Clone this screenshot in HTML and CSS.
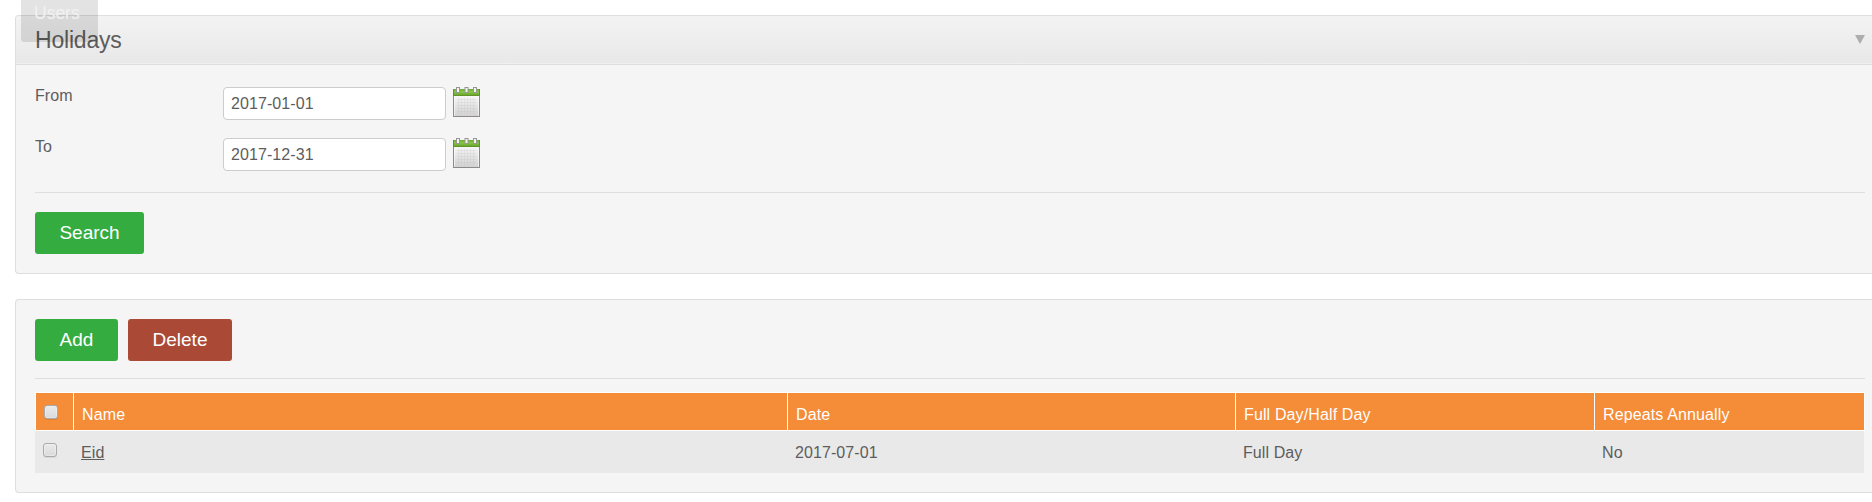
FILE: index.html
```html
<!DOCTYPE html>
<html lang="en">
<head>
<meta charset="utf-8">
<title>Holidays</title>
<link rel="stylesheet" href="styles.css">
</head>
<body>
<svg class="defs" width="0" height="0">
  <defs>
    <linearGradient id="paper" x1="0" y1="0" x2="0" y2="1"><stop offset="0" stop-color="#f8f8f8"/><stop offset="1" stop-color="#d2d0d1"/></linearGradient>
    <linearGradient id="band" x1="0" y1="0" x2="0" y2="1"><stop offset="0" stop-color="#6fa735"/><stop offset=".4" stop-color="#86c844"/><stop offset="1" stop-color="#649a2b"/></linearGradient>
    <symbol id="calendar" viewBox="0 0 27 30">
      <rect x=".5" y="8.5" width="26" height="21" fill="url(#paper)" stroke="#8b8b8b"/>
      <path d="M1.500 10v19M25.500 10v19" stroke="#fff" opacity=".6"/>
      <path d="M4 12.500h19M4 15.500h19M4 18.500h19M4 21.500h19M4 24.500h19M5.500 11v16M8.500 11v16M11.500 11v16M14.500 11v16M17.500 11v16M20.500 11v16" stroke="#bbb" opacity=".25"/>
      <rect x="0" y="2" width="27" height="7" fill="url(#band)"/>
      <path d="M.5 2v7M26.500 2v7M0 8.500h27" stroke="#5f9428" fill="none"/>
      <g fill="#f3f3f3" stroke="#969696"><rect x="3.500" y=".5" width="3" height="5"/><rect x="12" y=".5" width="3" height="5"/><rect x="20.500" y=".5" width="3" height="5"/></g>
    </symbol>
  </defs>
</svg>
<main class="page">
  <div class="menu-tab">Users</div>
  <section class="panel search-panel">
    <header class="panel-head"><h1>Holidays</h1>
      <svg class="toggle" width="10" height="9" viewBox="0 0 10 9"><path d="M0 0h10L5 9z" fill="#adadad"/></svg>
    </header>
    <form class="fields">
      <div class="field"><label for="from">From</label><input class="date" id="from" type="text" value="2017-01-01"><svg class="cal"><use href="#calendar"/></svg></div>
      <div class="field"><label for="to">To</label><input class="date" id="to" type="text" value="2017-12-31"><svg class="cal"><use href="#calendar"/></svg></div>
      <div class="search-actions"><button class="btn search" type="button">Search</button></div>
    </form>
  </section>
  <section class="panel list-panel">
    <div class="list-actions"><button class="btn add" type="button">Add</button><button class="btn delete" type="button">Delete</button></div>
    <div class="table">
      <div class="row head"><div class="cell check"><input class="box" type="checkbox"></div><div class="cell">Name</div><div class="cell">Date</div><div class="cell">Full Day/Half Day</div><div class="cell">Repeats Annually</div></div>
      <div class="row item"><div class="cell check"><input class="box" type="checkbox"></div><div class="cell"><a class="link" href="#">Eid</a></div><div class="cell">2017-07-01</div><div class="cell">Full Day</div><div class="cell">No</div></div>
    </div>
  </section>
</main>
</body>
</html>
```
FILE: styles.css
```css
* { box-sizing: border-box; }
body { margin: 0; background: #fff; color: #5d5d5d; font: 16px/20px "Liberation Sans", Arial, sans-serif; overflow: hidden; }
.defs { position: absolute; }
.page { position: relative; padding: 15px 0 0 15px; }
.menu-tab { position: absolute; z-index: 2; left: 21px; top: 0; width: 77px; height: 42px; padding: 3px 0 0 13px; border-radius: 0 0 3px 3px; background: rgba(0, 0, 0, .11); color: #f1f1f1; font-size: 17.5px; }
.panel { border: 1px solid #dedede; border-right: 0; border-radius: 4px 0 0 4px; background: #f5f5f5; }
.search-panel { height: 259px; margin-bottom: 25px; }
.panel-head { display: flex; justify-content: space-between; align-items: center; height: 49px; padding: 0 7px 0 19px; border-bottom: 1px solid #dedede; border-radius: 3px 0 0 0; background: linear-gradient(#f3f3f3, #e8e8e8); box-shadow: inset 0 -1px #f0f0f0; }
h1 { margin: 0; font-size: 23px; line-height: 28px; font-weight: 400; letter-spacing: -.2px; }
.toggle { display: block; margin-bottom: 1px; }
.fields { padding: 22px 7px 0 19px; }
.field { display: flex; height: 51px; }
.field label { width: 188px; line-height: 16px; padding-top: 1px; letter-spacing: .1px; }
.date { width: 223px; height: 33px; padding: 0 7px; border: 1px solid #ccc; border-radius: 4px; background: #fff; color: #5d5d5d; font: inherit; letter-spacing: .08px; }
.cal { width: 27px; height: 30px; margin-left: 7px; }
.search-actions { margin-top: 3px; padding-top: 19px; border-top: 1px solid #dedede; }
.btn { height: 42px; padding: 0; border: 0; border-radius: 3px; background: #34ac40; color: #fff; font: 19px/22px "Liberation Sans", Arial, sans-serif; text-align: center; }
.search { display: block; width: 109px; }
.add { width: 83px; }
.delete { width: 104px; background: #aa4a36; }
.list-panel { height: 194px; padding: 19px 7px 0 19px; }
.list-actions { display: flex; gap: 10px; height: 60px; border-bottom: 1px solid #dedede; }
.table { margin-top: 13px; letter-spacing: .08px; }
.row { display: grid; grid-template-columns: 39px 714px 448px 359px 270px; }
.head { height: 39px; border: 1px solid #fff; grid-template-columns: 38px 714px 448px 359px 269px; background: #f48c38; color: #fff; letter-spacing: .13px; }
.head .cell { padding: 12px 0 0 8px; border-right: 1px solid #fff; }
.head .cell:last-child { border-right: 0; }
.item { height: 42px; margin-right: 1px; background: #e9e9e9; }
.item .cell { padding: 12px 0 0 7px; }
.row .check { padding-top: 12px; }
.link { color: #5d5d5d; text-decoration: underline; }
.box { display: block; appearance: none; width: 14px; height: 14px; margin: 0; border: 1px solid #aaa; border-radius: 3px; background: linear-gradient(#eaeaea, #dadada); box-shadow: inset 0 0 0 1px rgba(255, 255, 255, .3), 0 1px rgba(0, 0, 0, .08); }
.item .box { margin-left: 1px; }
```
